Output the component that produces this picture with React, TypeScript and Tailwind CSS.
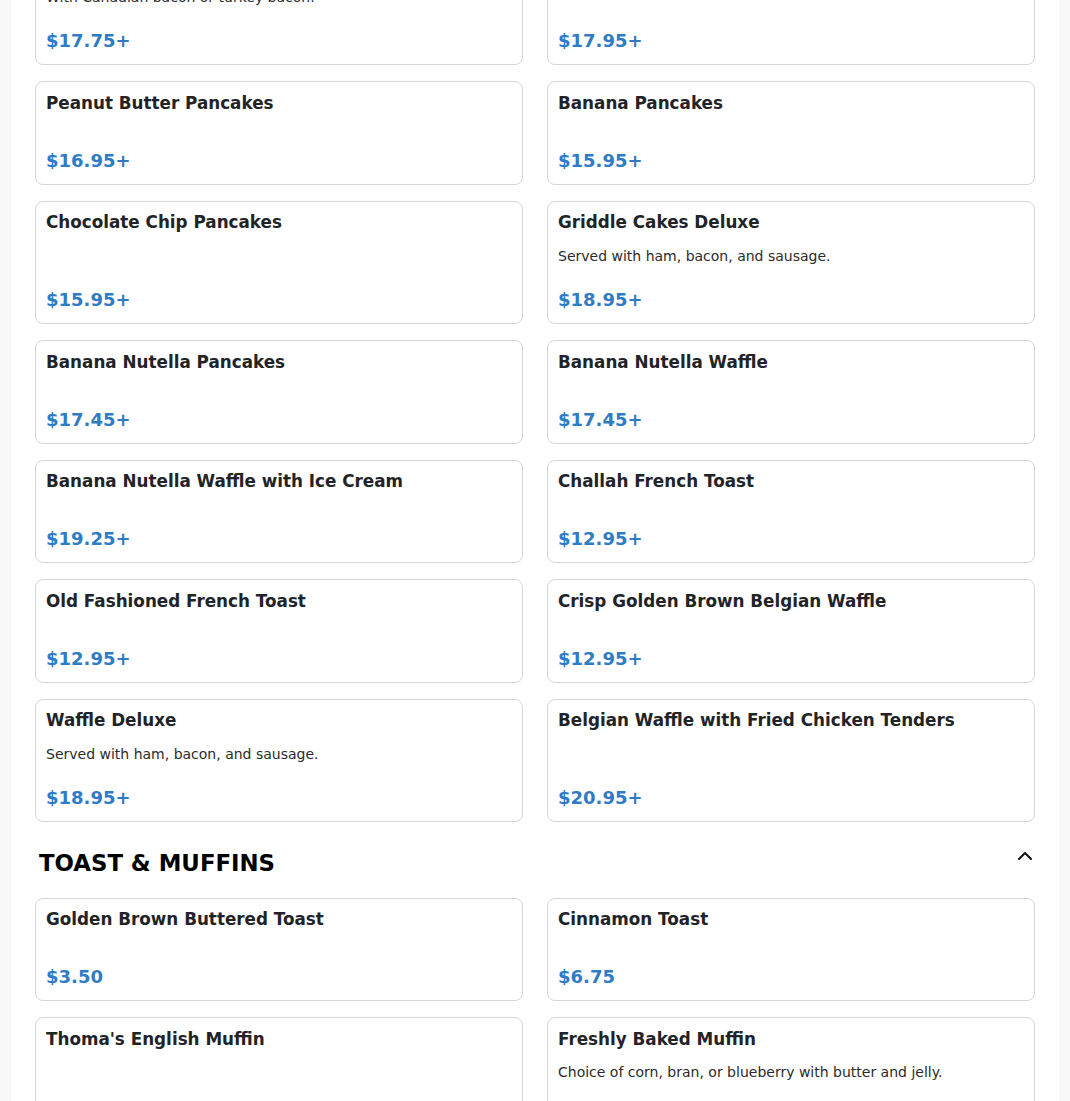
import React from "react";

type Item = { name: string; desc?: string; price: string };

const breakfast: Item[] = [
  { name: "Pancakes with Bacon", desc: "With Canadian bacon or turkey bacon.", price: "$17.75+" },
  { name: "Pancakes with Sausage", price: "$17.95+" },
  { name: "Peanut Butter Pancakes", price: "$16.95+" },
  { name: "Banana Pancakes", price: "$15.95+" },
  { name: "Chocolate Chip Pancakes", price: "$15.95+" },
  { name: "Griddle Cakes Deluxe", desc: "Served with ham, bacon, and sausage.", price: "$18.95+" },
  { name: "Banana Nutella Pancakes", price: "$17.45+" },
  { name: "Banana Nutella Waffle", price: "$17.45+" },
  { name: "Banana Nutella Waffle with Ice Cream", price: "$19.25+" },
  { name: "Challah French Toast", price: "$12.95+" },
  { name: "Old Fashioned French Toast", price: "$12.95+" },
  { name: "Crisp Golden Brown Belgian Waffle", price: "$12.95+" },
  { name: "Waffle Deluxe", desc: "Served with ham, bacon, and sausage.", price: "$18.95+" },
  { name: "Belgian Waffle with Fried Chicken Tenders", price: "$20.95+" },
];

const toast: Item[] = [
  { name: "Golden Brown Buttered Toast", price: "$3.50" },
  { name: "Cinnamon Toast", price: "$6.75" },
  { name: "Thoma's English Muffin", price: "$4.50" },
  {
    name: "Freshly Baked Muffin",
    desc: "Choice of corn, bran, or blueberry with butter and jelly.",
    price: "$5.25",
  },
];

function Card({ item }: { item: Item }) {
  return (
    <div className="flex flex-col rounded-lg border border-[#d6d6d6] bg-white px-[10px] pt-[8.5px] pb-[10px]">
      <h3 className="text-[16.8px] font-bold leading-[25.5px] text-[#222326]">{item.name}</h3>
      {item.desc ? (
        <p className="mt-[10px] text-[14px] leading-[21px] text-[#2b2b2b]">{item.desc}</p>
      ) : null}
      <div
        className={`${item.desc ? "pt-[19.5px]" : "pt-[30.5px]"} mt-auto text-[18px] font-bold leading-[27px] text-[#2f7bc5]`}
      >
        {item.price}
      </div>
    </div>
  );
}

function Grid({ items, className = "" }: { items: Item[]; className?: string }) {
  return (
    <div className={`grid grid-cols-2 gap-x-6 gap-y-4 ${className}`}>
      {items.map((it) => (
        <Card key={it.name} item={it} />
      ))}
    </div>
  );
}

export default function App() {
  return (
    <div className="h-[1101px] overflow-hidden bg-[#f8f8f8] px-[11px] font-['DejaVu_Sans',sans-serif]">
      <div className="min-h-full bg-white px-6">
        <Grid items={breakfast} className="-mt-[58.5px]" />
        <div className="flex items-start justify-between px-1 pt-[24px] pb-[17px]">
          <h2 className="text-[22.8px] font-bold leading-[34.5px] text-black">TOAST &amp; MUFFINS</h2>
          <svg
            width="24"
            height="24"
            viewBox="0 0 24 24"
            fill="none"
            stroke="#111"
            strokeWidth="2"
            strokeLinecap="round"
            strokeLinejoin="round"
            className="-mr-[6px] -mt-[2px]"
          >
            <path d="m18 15-6-6-6 6" />
          </svg>
        </div>
        <Grid items={toast} />
      </div>
    </div>
  );
}
